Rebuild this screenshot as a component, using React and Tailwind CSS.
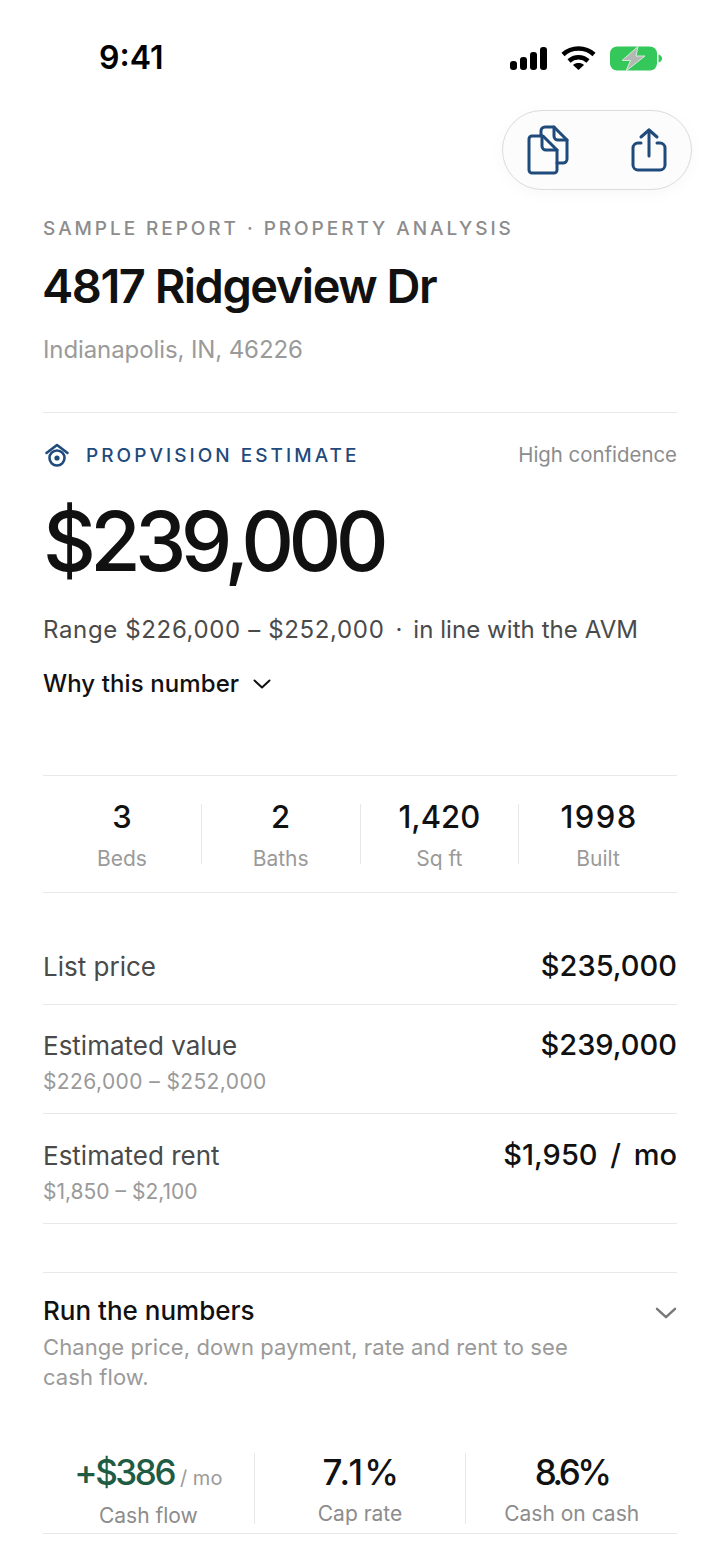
import React from 'react';

const stats = [
  { value: '3', label: 'Beds', track: '' },
  { value: '2', label: 'Baths', track: '' },
  { value: '1,420', label: 'Sq ft', track: '' },
  { value: '1998', label: 'Built', track: 'pl-[2px] tracking-[1.5px]' },
];

const rows = [
  { label: 'List price', value: '$235,000', h: 'h-[112px] pt-[57px]' },
  { label: 'Estimated value', sub: '$226,000 – $252,000', subTrack: 'tracking-[0.4px]', value: '$239,000', h: 'h-[109px] pt-[24px]' },
  { label: 'Estimated rent', sub: '$1,850 – $2,100', subTrack: '', value: '$1,950 / mo', h: 'h-[110px] pt-[25px]' },
];

const Chevron = ({ className, width = 18, height = 10 }) => (
  <svg className={className} width={width} height={height} viewBox="0 0 18 10" fill="none" stroke="currentColor" strokeWidth="2" strokeLinecap="round" strokeLinejoin="round">
    <path d="M1.500 1.500L9 8.500l7.500-7" />
  </svg>
);

const StatusBar = () => (
  <div className="flex h-[110px] items-start justify-between pl-[99px] pr-[58px] pt-[38px]">
    <span className="text-[32px] leading-[40px] font-semibold text-black">9:41</span>
    <div className="flex items-center gap-[14px] pt-[7px]">
      <svg width="37" height="24" viewBox="0 0 37 24" fill="#000">
        <rect x="0" y="15" width="7" height="9" rx="3" />
        <rect x="10" y="11" width="7" height="13" rx="3" />
        <rect x="20" y="6" width="7" height="18" rx="3" />
        <rect x="30" y="1" width="7" height="23" rx="3" />
      </svg>
      <svg width="35" height="26" viewBox="0 0 35 26" fill="none" stroke="#000" strokeWidth="4.5">
        <path d="M2 9.500C10.500 1.500 24.500 1.500 33 9.500" />
        <path d="M8 16C13.500 11 21.500 11 27 16" />
        <path d="M17.500 25l-5.500-5c3-2.600 8-2.600 11 0z" fill="#000" stroke="none" />
      </svg>
      <svg width="52" height="25" viewBox="0 0 52 25">
        <rect x="0" y="0.500" width="47" height="24" rx="7" fill="#34c759" />
        <path d="M48.500 8.500c2 .4 3.500 2 3.500 4s-1.500 3.600-3.500 4z" fill="#34c759" />
        <path d="M28 0.500L12 14.500H20.500L16 25L35 10H26Z" fill="#b4b8b4" stroke="#d5ecd8" strokeWidth="1" />
      </svg>
    </div>
  </div>
);

const ActionPill = () => (
  <div className="flex justify-end pr-[28px]">
    <div className="flex h-[80px] w-[190px] items-center justify-between rounded-full border border-[#dcdcdc] bg-[#fcfcfc] pl-[24px] pr-[24px] shadow-[0_4px_16px_rgba(0,0,0,0.03)]">
      <svg width="42" height="50" viewBox="0 0 42 50" fill="none" stroke="#1f4a7c" strokeWidth="3" strokeLinejoin="round" strokeLinecap="round">
        <path d="M14 10V6a4 4 0 0 1 4-4h9l13 13v19a4 4 0 0 1-4 4h-6" />
        <path d="M27 2v9a4 4 0 0 0 4 4h9" />
        <path d="M5 11h11l14 14v20a3 3 0 0 1-3 3H5a3 3 0 0 1-3-3V14a3 3 0 0 1 3-3z" />
        <path d="M15 11v10a4 4 0 0 0 4 4h11" />
      </svg>
      <svg width="36" height="44" viewBox="0 0 36 44" fill="none" stroke="#1f4a7c" strokeWidth="3" strokeLinejoin="round" strokeLinecap="round">
        <path d="M10 15H7a5 5 0 0 0-5 5v17a5 5 0 0 0 5 5h22a5 5 0 0 0 5-5V20a5 5 0 0 0-5-5h-3" />
        <path d="M18 28V2" />
        <path d="M10 9l8-7 8 7" />
      </svg>
    </div>
  </div>
);

const EstimateIcon = () => (
  <svg width="28" height="26" viewBox="0 0 28 26" fill="none" stroke="#1f4a7c" strokeWidth="2.600">
    <path d="M3.500 11L14 3l10.500 8" strokeLinecap="round" strokeLinejoin="round" />
    <circle cx="14" cy="16" r="7.500" />
    <circle cx="14" cy="16" r="2.600" fill="#1f4a7c" stroke="none" />
  </svg>
);

export default function App() {
  return (
    <div className="h-[1565px] w-[720px] overflow-hidden bg-white font-['Inter',sans-serif] text-[#111]">
      <StatusBar />
      <ActionPill />

      <div className="px-[43px]">
        <p className="mt-[28px] text-[19px] leading-[22px] font-medium tracking-[0.155em] text-[#8c8c8c] whitespace-nowrap">
          SAMPLE REPORT · PROPERTY ANALYSIS
        </p>
        <h1 className="mt-[21px] -ml-[1px] text-[47px] leading-[50px] font-semibold tracking-[-0.032em] whitespace-nowrap">
          4817 Ridgeview Dr
        </h1>
        <p className="mt-[24px] text-[24px] leading-[30px] tracking-[-0.1px] text-[#9a9a9a]">Indianapolis, IN, 46226</p>

        <div className="mt-[47px] border-t border-[#e8e8e8] pt-[27px]">
          <div className="flex h-[30px] items-center justify-between">
            <div className="flex items-center gap-[15px]">
              <EstimateIcon />
              <span className="pt-[2px] text-[19px] font-medium tracking-[0.16em] text-[#1f4a7c]">PROPVISION ESTIMATE</span>
            </div>
            <span className="text-[20.400px] text-[#8c8c8c]">High confidence</span>
          </div>
          <p className="mt-[22px] text-[82px] leading-[100px] font-medium tracking-[-0.07em]">$239,000</p>
          <p className="mt-[23px] flex gap-[11px] text-[24px] leading-[30px] text-[#4a4a4a] whitespace-nowrap">
            <span className="tracking-[0.64px]">Range $226,000 – $252,000</span>
            <span>·</span>
            <span className="tracking-[0.06px]">in line with the AVM</span>
          </p>
          <div className="mt-[24px] flex items-center gap-[14px] text-[24px] leading-[30px] tracking-[0.1px] font-medium text-[#111]">
            Why this number
            <Chevron />
          </div>
        </div>

        <div className="mt-[76px] flex h-[118px] items-center border-y border-[#e8e8e8]">
          {stats.map((s, i) => (
            <div key={s.label} className={`flex h-[60px] flex-1 flex-col items-center ${i < 3 ? 'border-r border-[#e8e8e8]' : ''}`}>
              <span className={`-mt-[6px] text-[31px] leading-[38px] font-medium ${s.track}`}>{s.value}</span>
              <span className="mt-[10px] text-[21px] leading-[26px] text-[#9a9a9a]">{s.label}</span>
            </div>
          ))}
        </div>

        {rows.map((r) => (
          <div key={r.label} className={`flex items-start justify-between border-b border-[#e8e8e8] ${r.h}`}>
            <div>
              <p className={`mt-[1px] text-[26px] leading-[32px] text-[#4a4a4a]`}>{r.label}</p>
              {r.sub && <p className={`mt-[7px] text-[21px] leading-[26px] text-[#9a9a9a] ${r.subTrack}`}>{r.sub}</p>}
            </div>
            <span className="text-[29px] leading-[32px] font-medium [word-spacing:5px]">{r.value}</span>
          </div>
        ))}

        <div className="mt-[48px] border-t border-[#e8e8e8] pt-[22px]">
          <div className="flex items-start justify-between">
            <div className="w-[560px]">
              <p className="text-[26px] leading-[32px] font-medium">Run the numbers</p>
              <p className="mt-[5px] text-[22px] leading-[30px] tracking-[0.08px] text-[#9a9a9a]">
                Change price, down payment, rate and rent to see cash flow.
              </p>
            </div>
            <Chevron className="mt-[12px] text-[#777]" width={22} height={12} />
          </div>
        </div>

        <div className="mt-[61px] flex h-[81px] border-b border-[#e8e8e8] pb-[9px]">
          <div className="flex flex-1 flex-col items-center border-r border-[#e8e8e8]">
            <div className="flex items-baseline gap-[6px] whitespace-nowrap">
              <span className="text-[35px] leading-[38px] font-medium tracking-[-0.07em] text-[#1f5c43]">+$386</span>
              <span className="text-[20px] text-[#9a9a9a]">/ mo</span>
            </div>
            <span className="mt-[10px] text-[21px] leading-[26px] text-[#8c8c8c]">Cash flow</span>
          </div>
          <div className="flex flex-1 flex-col items-center border-r border-[#e8e8e8]">
            <span className="pl-[3px] text-[35px] leading-[38px] font-medium tracking-[0.04em]">7.1%</span>
            <span className="mt-[10px] text-[21px] leading-[26px] text-[#8c8c8c]">Cap rate</span>
          </div>
          <div className="flex flex-1 flex-col items-center">
            <span className="text-[35px] leading-[38px] font-medium tracking-[-0.1em]">8.6%</span>
            <span className="mt-[10px] text-[21px] leading-[26px] text-[#8c8c8c]">Cash on cash</span>
          </div>
        </div>
      </div>
    </div>
  );
}
